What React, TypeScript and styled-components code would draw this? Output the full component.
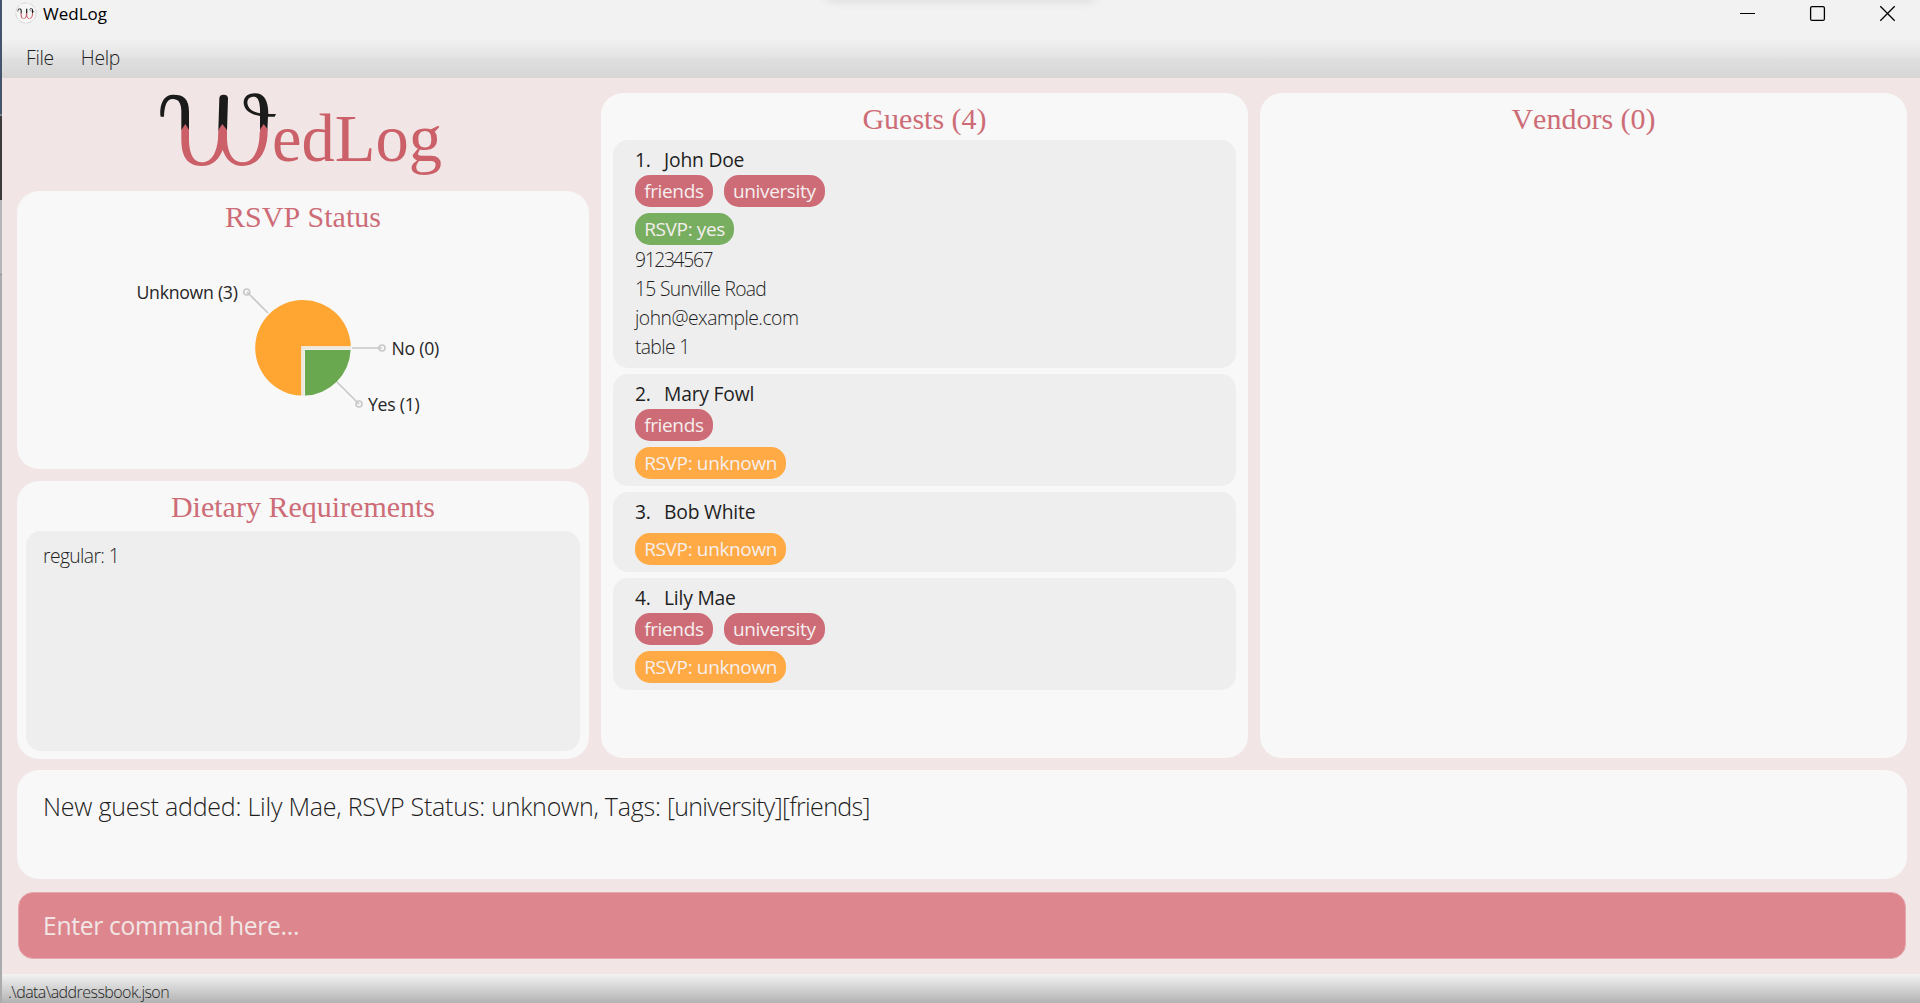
import React from 'react';
import styled, { createGlobalStyle } from 'styled-components';

const GlobalStyle = createGlobalStyle`
  * { box-sizing: border-box; }
  body { margin: 0; overflow: hidden; font-family: "Open Sans", "Noto Sans", sans-serif; color: #1f1f1f; }
`;

const rose = '#cd6c76';
const logoRose = '#cb6069';

const Desktop = styled.div`
  display: flex;
  width: 1920px;
  height: 1003px;
`;

const DesktopEdge = styled.div`
  width: 2px;
  background: linear-gradient(#44546c 0 114px, #7b8590 114px 116px, #3b3b3b 116px 200px, #b4b6b8 200px 274px, #8e9092 274px 275px, #a9abac 275px);
`;

const Window = styled.div`
  flex: 1;
  display: flex;
  flex-direction: column;
  background: #f1e5e5;
`;

const TitleBar = styled.header`
  position: relative;
  display: flex;
  align-items: flex-start;
  height: 38px;
  padding: 2px 24px 0 13px;
  background: #f2f2f2;
`;

const SnapShadow = styled.div`
  position: absolute;
  top: -12px;
  left: 824px;
  width: 270px;
  height: 10px;
  border-radius: 8px;
  box-shadow: 0 2px 12px rgba(0, 0, 0, 0.12);
`;

const WindowTitle = styled.div`
  flex: 1;
  margin-left: 5px;
  font-size: 17px;
  line-height: 24px;
  color: #000;
`;

const WindowControls = styled.div`
  display: flex;
  gap: 53px;
  padding-top: 3px;
  svg { display: block; }
`;

const MenuBar = styled.nav`
  display: flex;
  gap: 27px;
  height: 40px;
  padding: 0 24px;
  background: linear-gradient(#f2f2f2, #e3e3e3 50%, #dfdfdf 52%, #d6d6d6);
`;

const MenuItem = styled.span`
  font-size: 19.3px;
  line-height: 40px;
  font-weight: 300;
  letter-spacing: -0.3px;
`;

const Main = styled.main`
  display: grid;
  grid-template-columns: 572px 647px 647px;
  gap: 12px;
  height: 681px;
  padding-left: 15px;
`;

const Overview = styled.div`
  display: flex;
  flex-direction: column;
  gap: 12px;
`;

const Brand = styled.div`
  height: 101px;
  padding: 2px 0 0 123px;
`;

const Card = styled.section`
  display: flex;
  flex-direction: column;
  height: 278px;
  border-radius: 22px;
  background: #f8f8f8;
`;

const ListCard = styled(Card)`
  height: 665px;
  margin-top: 15px;
`;

const CardTitle = styled.h2`
  margin: 0;
  padding-top: 5px;
  font: 400 30px/42px "Liberation Serif", "Times New Roman", serif;
  font-kerning: none;
  text-align: center;
  color: ${rose};
`;

const PieLabel = styled.text`
  font-size: 17.7px;
  letter-spacing: -0.28px;
  fill: #262626;
`;

const DietList = styled.div`
  flex: 1;
  margin: 3px 9px 8px;
  padding: 10px 17px;
  border-radius: 15px;
  background: #eee;
  font-size: 19.3px;
  font-weight: 300;
  line-height: 30px;
  letter-spacing: -0.6px;
`;

const GuestList = styled.div`
  display: flex;
  flex-direction: column;
  gap: 6px;
  padding: 0 12px;
`;

const GuestRow = styled.article`
  padding: 5px 22px 7px;
  border-radius: 15px;
  background: #eee;
`;

const GuestName = styled.div`
  display: grid;
  grid-template-columns: 29px 1fr;
  font-size: 19.3px;
  line-height: 30px;
  letter-spacing: -0.2px;
`;

const TagRow = styled.div`
  display: flex;
  gap: 11px;
`;

const RsvpRow = styled(TagRow)`
  margin-top: 6px;
`;

const Pill = styled.span<{ $color: string }>`
  height: 32px;
  padding: 0 9.2px;
  border-radius: 15px;
  background: ${p => p.$color};
  color: #f5efef;
  font-size: 19px;
  line-height: 32px;
  letter-spacing: -0.36px;
`;

const Details = styled.div``;

const DetailLine = styled.div<{ $tracking: number }>`
  font-size: 19.3px;
  font-weight: 300;
  line-height: 29px;
  letter-spacing: ${p => p.$tracking}px;
`;

const ResultBox = styled.section`
  height: 109px;
  margin: 11px 13px 0 15px;
  padding: 20px 26px;
  border-radius: 22px;
  background: #f8f8f8;
  font-size: 25px;
  font-weight: 300;
  line-height: 33px;
  letter-spacing: -0.23px;
`;

const ResultTags = styled.span`
  letter-spacing: -0.68px;
`;

const CommandBox = styled.input`
  height: 67px;
  margin: 13px 14px 0 16px;
  padding: 0 24px 1px;
  border: 1px solid #e5aab0;
  border-radius: 15px;
  background: #dd868d;
  outline: none;
  font: 400 24.7px "Open Sans", "Noto Sans", sans-serif;
  letter-spacing: -0.34px;
  &::placeholder { color: #f1e5e5; opacity: 1; }
`;

const StatusBar = styled.footer`
  height: 29px;
  margin-top: auto;
  padding: 7px 6px 0;
  background: linear-gradient(#f2f2f2, #d0d0d0 55%, #b2b2b2);
  font-size: 16px;
  font-weight: 300;
  line-height: 23px;
  letter-spacing: -0.55px;
`;

const LogoW = () => (
  <>
    <path
      fill="#1b1b1b"
      d="M62 110 C58 82 66 46 97 44 C130 43 147 55 147 95 V150 H124 V92 C123 68 115 57 98 57 C80 57 73 78 72 110Z
         M238 54 Q239 44 251 44 Q263 44 264 54 L261 152 H235Z"
    />
    <path
      fill="#1b1b1b"
      fillRule="evenodd"
      d="M408 102 L404 110 H384 L382 150 H360 V108 C328 104 310 86 311 66 C313 48 326 40 345 40 C372 40 385 62 385 102Z
         M360 100 C361 70 356 50 342 50 C330 50 322 56 322 68 C323 84 337 96 360 100Z"
    />
    <path
      fill={logoRose}
      d="M124 150 L136 132 L147 149 V185 C149 226 163 247 186 247 C216 247 231 216 234 175 L235 150 L247 132 L261 150 V180
         C264 224 280 247 310 247 C340 247 358 210 359 160 L361 147 L371 132 L383 148 C384 212 357 258 308 258
         C277 258 259 240 248 210 C236 240 217 258 185 258 C140 258 124 228 124 178Z"
    />
  </>
);

const AppIcon = () => (
  <svg width="23" height="23" viewBox="0 0 23 23">
    <circle cx="11" cy="11" r="10.2" fill="#f6f6f6" stroke="#cfcfcf" strokeWidth="0.8" strokeDasharray="7 1.5" />
    <g transform="translate(-0.3 4.4) scale(0.048)"><LogoW /></g>
  </svg>
);

const Logo = () => (
  <svg width="320" height="110" viewBox="0 0 960 330">
    <LogoW />
    <text x="396" y="243" fontFamily="Liberation Serif, serif" fontSize="205" fill={logoRose} textLength="510" lengthAdjust="spacingAndGlyphs">
      edLog
    </text>
  </svg>
);

const RsvpPie = () => (
  <svg width="572" height="226" viewBox="17 238 572 226">
    <g stroke="#c8c8c8" strokeWidth="1.6" fill="none">
      <path d="M247 292 L268 313 M352 348 H382 M337 382 L359 404" />
      <circle cx="246.7" cy="292" r="3" />
      <circle cx="382" cy="348" r="3" />
      <circle cx="359" cy="404" r="3" />
    </g>
    <path d="M301.3 346.3 H350.8 A47.8 47.8 0 1 0 301.3 395.6Z" fill="#ffa531" />
    <path d="M305 350 H350.6 A47.6 47.6 0 0 1 305 395.6Z" fill="#6aa84f" />
    <path d="M351 348 H303 V396" fill="none" stroke="#ece8dd" strokeWidth="3" />
    <PieLabel x="136.5" y="299">Unknown (3)</PieLabel>
    <PieLabel x="391.5" y="355">No (0)</PieLabel>
    <PieLabel x="368" y="411">Yes (1)</PieLabel>
  </svg>
);

type Rsvp = 'yes' | 'no' | 'unknown';
type Guest = { name: string; tags: string[]; rsvp: Rsvp; details?: { text: string; tracking: number }[] };

const rsvpColors: Record<Rsvp, string> = { yes: '#78ae60', no: rose, unknown: '#ffaa44' };

const guests: Guest[] = [
  {
    name: 'John Doe',
    tags: ['friends', 'university'],
    rsvp: 'yes',
    details: [
      { text: '91234567', tracking: -1.35 },
      { text: '15 Sunville Road', tracking: -0.7 },
      { text: 'john@example.com', tracking: -0.5 },
      { text: 'table 1', tracking: -0.65 },
    ],
  },
  { name: 'Mary Fowl', tags: ['friends'], rsvp: 'unknown' },
  { name: 'Bob White', tags: [], rsvp: 'unknown' },
  { name: 'Lily Mae', tags: ['friends', 'university'], rsvp: 'unknown' },
];

export default function App() {
  return (
    <Desktop>
      <GlobalStyle />
      <DesktopEdge />
      <Window>
        <TitleBar>
          <AppIcon />
          <WindowTitle>WedLog</WindowTitle>
          <SnapShadow />
          <WindowControls>
            <svg width="17" height="18" viewBox="0 0 17 18"><path d="M1 8.5H16" stroke="#000" /></svg>
            <svg width="17" height="18" viewBox="0 0 17 18"><rect x="1.6" y="1.6" width="13.8" height="13.8" rx="1.5" fill="none" stroke="#000" strokeWidth="1.3" /></svg>
            <svg width="17" height="18" viewBox="0 0 17 18"><path d="M1.3 1.3L15.7 15.7M15.7 1.3L1.3 15.7" stroke="#000" strokeWidth="1.3" /></svg>
          </WindowControls>
        </TitleBar>
        <MenuBar>
          <MenuItem>File</MenuItem>
          <MenuItem>Help</MenuItem>
        </MenuBar>
        <Main>
          <Overview>
            <Brand><Logo /></Brand>
            <Card>
              <CardTitle>RSVP Status</CardTitle>
              <RsvpPie />
            </Card>
            <Card>
              <CardTitle>Dietary Requirements</CardTitle>
              <DietList>regular: 1</DietList>
            </Card>
          </Overview>
          <ListCard>
            <CardTitle>Guests (4)</CardTitle>
            <GuestList>
              {guests.map((g, i) => (
                <GuestRow key={g.name}>
                  <GuestName><span>{i + 1}.</span><span>{g.name}</span></GuestName>
                  {g.tags.length > 0 && (
                    <TagRow>{g.tags.map(t => <Pill key={t} $color={rose}>{t}</Pill>)}</TagRow>
                  )}
                  <RsvpRow><Pill $color={rsvpColors[g.rsvp]}>RSVP: {g.rsvp}</Pill></RsvpRow>
                  {g.details && (
                    <Details>
                      {g.details.map(d => <DetailLine key={d.text} $tracking={d.tracking}>{d.text}</DetailLine>)}
                    </Details>
                  )}
                </GuestRow>
              ))}
            </GuestList>
          </ListCard>
          <ListCard>
            <CardTitle>Vendors (0)</CardTitle>
          </ListCard>
        </Main>
        <ResultBox>
          New guest added: Lily Mae, RSVP Status: unknown, Tags: <ResultTags>[university][friends]</ResultTags>
        </ResultBox>
        <CommandBox placeholder="Enter command here..." />
        <StatusBar>.\data\addressbook.json</StatusBar>
      </Window>
    </Desktop>
  );
}
